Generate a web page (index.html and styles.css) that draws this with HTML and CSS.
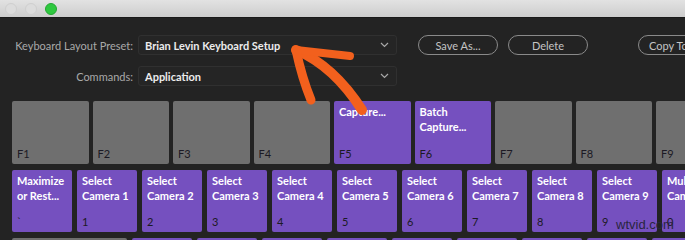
FILE: index.html
```html
<!DOCTYPE html>
<html>
<head>
<meta charset="utf-8">
<link rel="stylesheet" href="styles.css">
</head>
<body>
<div class="window">
  <div class="titlebar">
    <span class="light off"></span>
    <span class="light off"></span>
    <span class="light green"></span>
  </div>
  <div class="panel">
    <div class="form">
      <div class="row">
        <label class="label">Keyboard Layout Preset:</label>
        <div class="select"><span class="value">Brian Levin Keyboard Setup</span><svg class="chev" width="9" height="6" viewBox="0 0 9 6"><path d="M1 1 L4.5 4.5 L8 1" fill="none" stroke="#a8a8a8" stroke-width="1.2"/></svg></div>
        <button class="btn save">Save As...</button>
        <button class="btn delete">Delete</button>
        <button class="btn copy">Copy To</button>
      </div>
      <div class="row">
        <label class="label">Commands:</label>
        <div class="select"><span class="value">Application</span><svg class="chev" width="9" height="6" viewBox="0 0 9 6"><path d="M1 1 L4.5 4.5 L8 1" fill="none" stroke="#a8a8a8" stroke-width="1.2"/></svg></div>
      </div>
    </div>
    <div class="keys">
      <div class="keyrow frow">
        <div class="key gray"><span class="cmd"></span><span class="kname">F1</span></div>
        <div class="key gray"><span class="cmd"></span><span class="kname">F2</span></div>
        <div class="key gray"><span class="cmd"></span><span class="kname">F3</span></div>
        <div class="key gray"><span class="cmd"></span><span class="kname">F4</span></div>
        <div class="key purple"><span class="cmd">Capture...</span><span class="kname">F5</span></div>
        <div class="key purple"><span class="cmd">Batch<br>Capture...</span><span class="kname">F6</span></div>
        <div class="key gray"><span class="cmd"></span><span class="kname">F7</span></div>
        <div class="key gray"><span class="cmd"></span><span class="kname">F8</span></div>
        <div class="key gray"><span class="cmd"></span><span class="kname">F9</span></div>
      </div>
      <div class="keyrow numrow">
        <div class="key purple"><span class="cmd">Maximize<br>or Rest...</span><span class="kname">`</span></div>
        <div class="key purple"><span class="cmd">Select<br>Camera 1</span><span class="kname">1</span></div>
        <div class="key purple"><span class="cmd">Select<br>Camera 2</span><span class="kname">2</span></div>
        <div class="key purple"><span class="cmd">Select<br>Camera 3</span><span class="kname">3</span></div>
        <div class="key purple"><span class="cmd">Select<br>Camera 4</span><span class="kname">4</span></div>
        <div class="key purple"><span class="cmd">Select<br>Camera 5</span><span class="kname">5</span></div>
        <div class="key purple"><span class="cmd">Select<br>Camera 6</span><span class="kname">6</span></div>
        <div class="key purple"><span class="cmd">Select<br>Camera 7</span><span class="kname">7</span></div>
        <div class="key purple"><span class="cmd">Select<br>Camera 8</span><span class="kname">8</span></div>
        <div class="key purple"><span class="cmd">Select<br>Camera 9</span><span class="kname">9</span></div>
        <div class="key purple"><span class="cmd">Multi-<br>Camera</span><span class="kname">0</span></div>
      </div>
      <div class="keyrow thirdrow">
        <div class="key gray tab"></div>
        <div class="key purple"></div>
        <div class="key purple"></div>
        <div class="key purple"></div>
        <div class="key purple"></div>
        <div class="key purple"></div>
        <div class="key purple"></div>
        <div class="key purple"></div>
        <div class="key purple"></div>
        <div class="key purple"></div>
      </div>
    </div>
  </div>
  <svg class="arrow" width="685" height="240" viewBox="0 0 685 240">
    <g fill="none" stroke="#f2601d" stroke-linecap="round" stroke-linejoin="round">
      <path d="M296 50 Q 334 66 362 110" stroke-width="10"/>
      <path d="M296 50 L 350 56" stroke-width="8"/>
      <path d="M296 50 Q 302 78 311 100" stroke-width="9"/>
    </g>
  </svg>
  <div class="watermark">wtvid.com</div>
</div>
</body>
</html>
```

FILE: styles.css
```css
html, body {
  margin: 0;
  padding: 0;
  background: #232323;
  overflow: hidden;
}
.window {
  position: relative;
  width: 685px;
  height: 240px;
  overflow: hidden;
  font-family: Lato, "Open Sans", sans-serif;
}
.titlebar {
  height: 18px;
  background: linear-gradient(#e2e2e2, #cdcdcd);
  border-bottom: 1px solid #1a1a1a;
  display: flex;
  align-items: center;
  gap: 8px;
  padding-left: 5px;
  box-sizing: border-box;
}
.light {
  width: 12px;
  height: 12px;
  border-radius: 50%;
  box-sizing: border-box;
}
.light.off {
  background: #dcdcdc;
  border: 1px solid #cfcfcf;
}
.light.green {
  background: #2ec83f;
  border: 1px solid #23a832;
}
.panel {
  padding-top: 17px;
}
.form {
  display: flex;
  flex-direction: column;
  gap: 11px;
}
.row {
  display: flex;
  align-items: center;
  height: 20px;
}
.row > * {
  flex-shrink: 0;
}
.label {
  width: 133px;
  text-align: right;
  color: #a9a9a9;
  font-size: 11px;
  margin-right: 5px;
  white-space: nowrap;
}
.select {
  width: 259px;
  height: 20px;
  box-sizing: border-box;
  background: #252525;
  border: 1px solid #303030;
  border-radius: 3px;
  display: flex;
  align-items: center;
  justify-content: space-between;
  padding: 0 7px 0 6px;
}
.value {
  color: #ececec;
  font-size: 11px;
  font-weight: 700;
  white-space: nowrap;
}
.btn {
  height: 20px;
  width: 80px;
  box-sizing: border-box;
  border: 1.5px solid #8a8a8a;
  border-radius: 10px;
  background: transparent;
  color: #c4c4c4;
  font-family: Lato, "Open Sans", sans-serif;
  font-size: 11px;
  padding: 0;
  white-space: nowrap;
}
.btn.save { margin-left: 21px; }
.btn.delete { margin-left: 10px; }
.btn.copy {
  margin-left: 50px;
  width: auto;
  padding: 0 10px;
}
.keys {
  margin-top: 15px;
  padding-left: 12px;
  display: flex;
  flex-direction: column;
  gap: 6px;
}
.keyrow {
  display: flex;
}
.frow { gap: 4px; height: 63px; }
.frow .key { width: 76.5px; }
.numrow { gap: 5px; height: 62px; }
.numrow .key { width: 60px; }
.thirdrow { gap: 5px; height: 60px; }
.thirdrow .key { width: 60px; }
.thirdrow .key.tab { width: 115px; }
.key {
  flex-shrink: 0;
  border-radius: 2px;
  box-sizing: border-box;
  padding: 3px 5px 3px 5px;
  display: flex;
  flex-direction: column;
  justify-content: space-between;
  overflow: hidden;
}
.key.gray { background: #6f6f6f; }
.key.purple { background: #7550bf; }
.cmd {
  color: #ffffff;
  font-size: 11px;
  font-weight: 700;
  line-height: 15px;
  white-space: nowrap;
}
.kname {
  color: #1c1a24;
  font-size: 11px;
  line-height: 14px;
}
.arrow {
  position: absolute;
  left: 0;
  top: 0;
  pointer-events: none;
}
.watermark {
  position: absolute;
  left: 616px;
  top: 217px;
  color: #2a2540;
  font-family: "Liberation Sans", Arial, sans-serif;
  font-size: 13px;
}
```
